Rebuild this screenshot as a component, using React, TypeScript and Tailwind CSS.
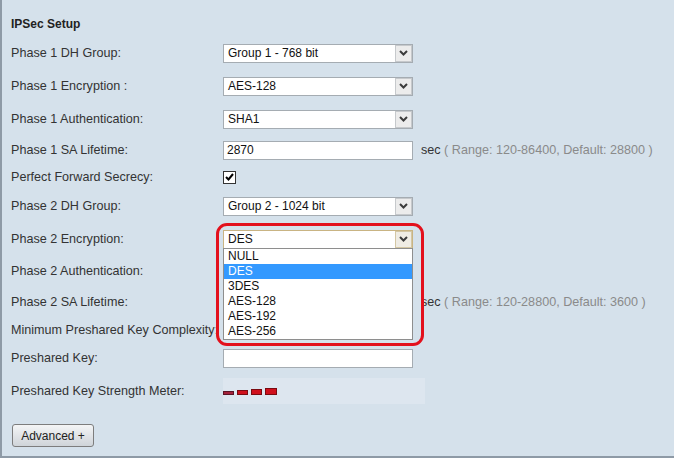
import React from 'react';

const font = { fontFamily: '"Liberation Sans", Arial, sans-serif' };

interface RowProps {
  label: string;
  className?: string;
  children?: React.ReactNode;
}

const Row: React.FC<RowProps> = ({ label, className = '', children }) => (
  <div className={`flex items-center h-[20px] ${className}`}>
    <div className="w-[212px] shrink-0 whitespace-nowrap text-[12.6px] leading-[16px] text-[#333]">{label}</div>
    <div className="flex items-center">{children}</div>
  </div>
);

const Chevron = () => (
  <svg width="9" height="6" viewBox="0 0 9 6">
    <path d="M1 1 L4.5 4.5 L8 1" fill="none" stroke="#3c3c3c" strokeWidth="2" />
  </svg>
);

const Select: React.FC<{ value: string; focused?: boolean }> = ({ value, focused }) => (
  <div
    className={`flex items-stretch w-[190px] h-[19px] bg-white border ${
      focused ? 'border-[#c9b483]' : 'border-[#a5acb2]'
    }`}
  >
    <div className="flex-1 pl-[4px] text-[12px] leading-[17px] text-[#111]">{value}</div>
    <div
      className={`w-[17px] flex items-center justify-center border ${
        focused ? 'border-[#d4c7a4] bg-[#efece4]' : 'border-[#c6c9cc] bg-[#ececec]'
      }`}
    >
      <Chevron />
    </div>
  </div>
);

const TextInput: React.FC<{ value?: string }> = ({ value = '' }) => (
  <div className="w-[190px] h-[19px] bg-white border border-[#a5acb2] pl-[3px] text-[12px] leading-[17px] text-[#111]">
    {value}
  </div>
);

const Range: React.FC<{ text: string }> = ({ text }) => (
  <span className="ml-[8px] whitespace-nowrap text-[12.6px] leading-[16px]">
    <span className="text-[#333]">sec</span>
    <span className="text-[#8a8a8a]"> {text}</span>
  </span>
);

const options = ['NULL', 'DES', '3DES', 'AES-128', 'AES-192', 'AES-256'];

export default function App() {
  return (
    <div
      style={font}
      className="relative w-[674px] h-[458px] bg-[#d5e1eb] border-l-2 border-b-2 border-[#8e9aa6] pl-[9px] pt-[17px] overflow-hidden"
    >
      <div className="text-[12px] leading-[14px] font-bold text-[#222]">IPSec Setup</div>

      <Row label="Phase 1 DH Group:" className="mt-[12px]">
        <Select value="Group 1 - 768 bit" />
      </Row>
      <Row label="Phase 1 Encryption :" className="mt-[13px]">
        <Select value="AES-128" />
      </Row>
      <Row label="Phase 1 Authentication:" className="mt-[13px]">
        <Select value="SHA1" />
      </Row>
      <Row label="Phase 1 SA Lifetime:" className="mt-[11px]">
        <TextInput value="2870" />
        <Range text="( Range: 120-86400, Default: 28800 )" />
      </Row>
      <Row label="Perfect Forward Secrecy:" className="mt-[7px]">
        <div className="w-[13px] h-[13px] bg-white border border-[#333] flex items-center justify-center">
          <svg width="9" height="8" viewBox="0 0 9 8">
            <path d="M1 4 L3.5 6.5 L8 1" fill="none" stroke="#000" strokeWidth="2" />
          </svg>
        </div>
      </Row>
      <Row label="Phase 2 DH Group:" className="mt-[9px]">
        <Select value="Group 2 - 1024 bit" />
      </Row>
      <Row label="Phase 2 Encryption:" className="mt-[13px]">
        <Select value="DES" focused />
      </Row>
      <Row label="Phase 2 Authentication:" className="mt-[12px]">
        <Select value="" />
      </Row>
      <Row label="Phase 2 SA Lifetime:" className="mt-[11px]">
        <TextInput />
        <Range text="( Range: 120-28800, Default: 3600 )" />
      </Row>
      <Row label="Minimum Preshared Key Complexity:" className="mt-[8px]">
        <div className="w-[13px] h-[13px] bg-white border border-[#333]" />
      </Row>
      <Row label="Preshared Key:" className="mt-[8px]">
        <TextInput />
      </Row>
      <div className="flex items-center h-[26px] mt-[10px]">
        <div className="w-[212px] shrink-0 text-[12.6px] leading-[16px] text-[#333]">Preshared Key Strength Meter:</div>
        <div className="w-[202px] h-[26px] bg-[#dde6ef] flex items-end gap-[3px] pb-[9px]">
          <div className="w-[11px] h-[4px] bg-[#a3213a] border border-[#5c1424]" />
          <div className="w-[11px] h-[5px] bg-[#d0101c] border border-[#7a0a10]" />
          <div className="w-[11px] h-[6px] bg-[#d0101c] border border-[#7a0a10]" />
          <div className="w-[12px] h-[7px] bg-[#d0101c] border border-[#7a0a10]" />
        </div>
      </div>

      <button className="mt-[20px] ml-[1px] w-[82px] h-[23px] rounded-[3px] border border-[#7d7d7d] bg-gradient-to-b from-[#f4f5f6] to-[#cfd4d9] text-[12px] text-[#222]">
        Advanced +
      </button>

      <div className="absolute left-[221px] top-[248px] w-[190px] bg-white border border-[#8e8e8e]">
        {options.map((o) => (
          <div
            key={o}
            className={`h-[15px] pl-[4px] text-[12px] leading-[15px] ${
              o === 'DES' ? 'bg-[#3399ff] text-white' : 'text-[#111]'
            }`}
          >
            {o}
          </div>
        ))}
      </div>

      <div className="absolute left-[214px] top-[223px] w-[208px] h-[123px] border-[3px] border-[#e3101c] rounded-[11px]" />
    </div>
  );
}
